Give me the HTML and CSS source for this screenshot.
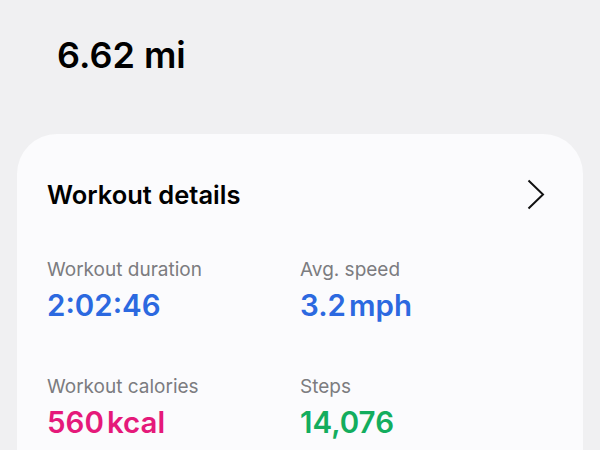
FILE: index.html
```html
<!DOCTYPE html>
<html>
<head>
<meta charset="utf-8">
<link rel="stylesheet" href="styles.css">
</head>
<body>
<div class="page">
  <div class="distance">6.62 mi</div>
  <section class="card">
    <div class="card-head">
      <h2 class="card-title">Workout details</h2>
      <svg class="chevron" width="18" height="31" viewBox="0 0 18 31"><path d="M1.5 1.5 L16 15.5 L1.5 29.5" fill="none" stroke="#111" stroke-width="2"/></svg>
    </div>
    <div class="stats">
      <div class="stat">
        <div class="stat-label">Workout duration</div>
        <div class="stat-value blue">2:02:46</div>
      </div>
      <div class="stat">
        <div class="stat-label">Avg. speed</div>
        <div class="stat-value blue">3.2<span class="unit">mph</span></div>
      </div>
      <div class="stat">
        <div class="stat-label">Workout calories</div>
        <div class="stat-value pink">560<span class="unit">kcal</span></div>
      </div>
      <div class="stat">
        <div class="stat-label">Steps</div>
        <div class="stat-value green">14,076</div>
      </div>
    </div>
  </section>
</div>
</body>
</html>
```
FILE: styles.css
```css
html, body {
  margin: 0;
  padding: 0;
  background: #f0f0f2;
  font-family: Inter, "Noto Sans", sans-serif;
  overflow: hidden;
}
.page {
  width: 600px;
  height: 450px;
  padding: 0 17px;
  box-sizing: border-box;
}
.distance {
  padding: 33px 0 0 40px;
  height: 134px;
  box-sizing: border-box;
  font-size: 36px;
  font-weight: 600;
  color: #000;
  line-height: 44px;
}
.card {
  background: #fbfbfd;
  border-radius: 40px 40px 0 0;
  padding: 30px 30px 40px;
  height: 330px;
  box-sizing: border-box;
}
.card-head {
  display: flex;
  justify-content: space-between;
  align-items: center;
  height: 60px;
}
.card-title {
  margin: 0;
  font-size: 25.5px;
  font-weight: 600;
  color: #000;
}
.chevron {
  margin-right: 8px;
}
.stats {
  display: grid;
  grid-template-columns: 253px 1fr;
  row-gap: 52px;
  margin-top: 34px;
}
.stat-label {
  font-size: 19px;
  color: #7c7c80;
  line-height: 24px;
}
.stat-value {
  margin-top: 5px;
  font-size: 29.5px;
  font-weight: 600;
  line-height: 36px;
}
.unit { margin-left: 3px; }
.blue { color: #2c69e0; }
.pink { color: #e5197a; }
.green { color: #13ad5e; }
```
